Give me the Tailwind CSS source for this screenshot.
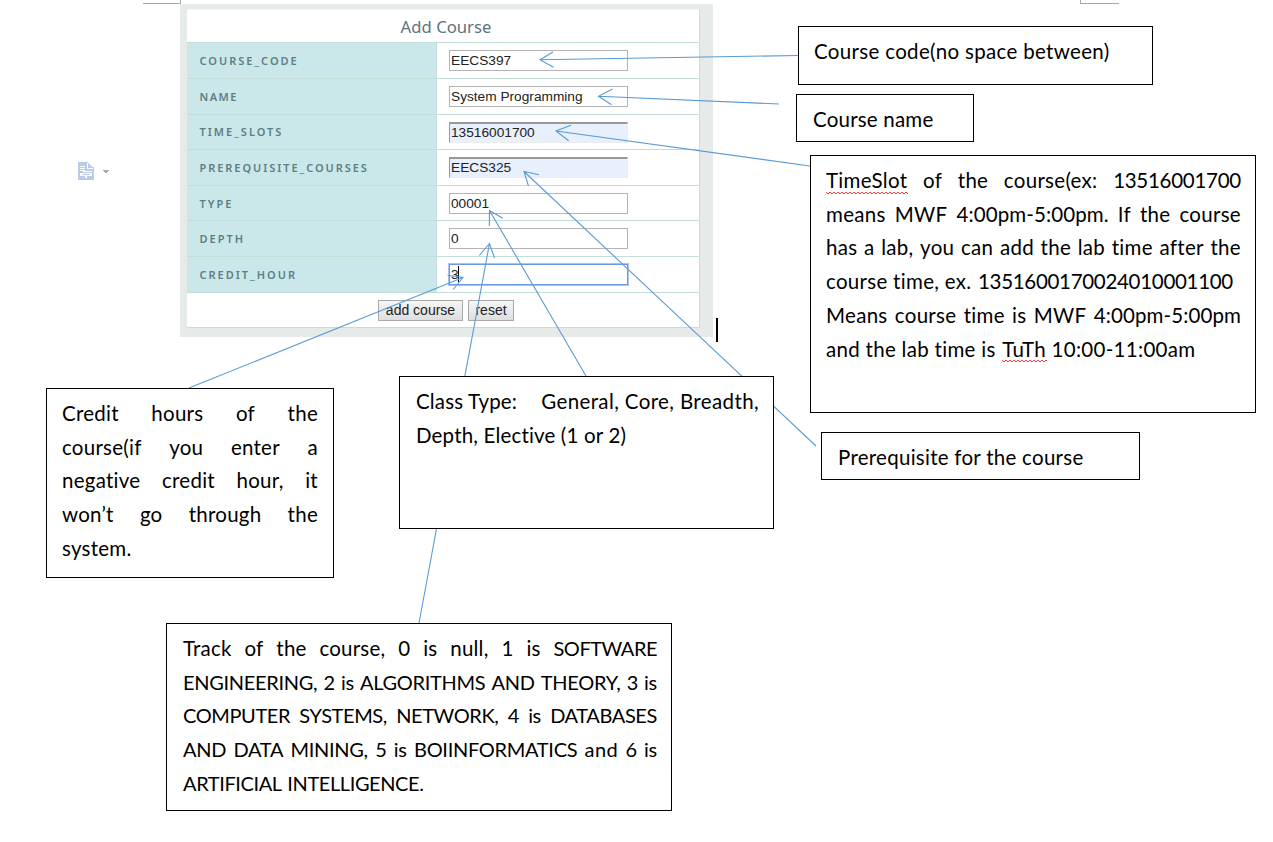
<!DOCTYPE html>
<html lang="en"><head><meta charset="utf-8"><title>Add Course</title>
<script src="https://cdn.jsdelivr.net/npm/@tailwindcss/browser@4"></script></head>
<body class="bg-white">
<main class="relative h-[842px] w-[1273px] overflow-hidden bg-white font-['Lato',sans-serif] text-[20.5px] leading-[33.7px] text-black">

  <!-- page corner marks -->
  <div class="absolute left-[143px] top-0 h-1 w-[38px] border-r border-b border-[#a8a8a8]"></div>
  <div class="absolute left-[1080px] top-0 h-1 w-[39px] border-l border-b border-[#a8a8a8]"></div>

  <!-- paste options -->
  <div class="absolute left-[78px] top-[162px] flex items-center gap-[9px]">
    <svg width="16" height="18" viewBox="0 0 16 18" shape-rendering="crispEdges">
      <path d="M0 0H10V1H11V2H12V3H13V4H14V5H16V18H0Z" fill="#b8cce9"/>
      <path d="M9 1H10V6H15V7H9Z M2 4H7V5H2Z M2 6H7V7H2Z M2 8H7V9H2Z M5 9H14V10H5Z M2 11H14V14H9V16H7V14H2Z" fill="#fff"/>
      <path d="M4 12H12V13H4Z" fill="#b8cce9"/>
    </svg>
    <svg width="6" height="3" viewBox="0 0 6 3" shape-rendering="crispEdges"><path d="M0 0H6V1H5V2H4V3H2V2H1V1H0Z" fill="#a8a8a8"/></svg>
  </div>

  <!-- form -->
  <form class="absolute left-[180px] top-1 h-[333px] w-[533px] bg-[#e6eae8] pl-[7px] pr-[13px] pt-[5px] font-['Liberation_Sans',sans-serif] text-[13.7px] leading-[19px] text-[#222]">
    <div class="border-r border-[#c9dfdc] bg-white">
      <div class="flex h-[33.4px] items-center justify-center border-t border-[#f5f8f7] pl-[6px] font-['Noto_Sans',sans-serif] text-[16.7px] text-[#5b7480]">Add Course</div>
      <div class="grid auto-rows-[35.6px] grid-cols-[250px_1fr] [&>*]:border-t [&>*]:border-[#c5ddd9] [&>label]:flex [&>label]:items-center [&>label]:border-r [&>label]:bg-[#cae8ea] [&>label]:pl-[12.5px] [&>label]:font-['Noto_Sans',sans-serif] [&>label]:text-[11px] [&>label]:font-semibold [&>label]:tracking-[2px] [&>label]:text-[#5d7e84] [&>div]:pl-3 [&>div]:pt-[7px]">
        <label>COURSE_CODE</label><div><p class="h-[21px] w-[179px] border border-[#b4b4b4] pl-px">EECS397</p></div>
        <label class="tracking-[1.5px]!">NAME</label><div><p class="h-[21px] w-[179px] border border-[#b4b4b4] pl-px">System Programming</p></div>
        <label>TIME_SLOTS</label><div><p class="h-[21px] w-[179px] border border-t-2 border-[#ececec] border-t-[#999] border-l-[#999] bg-[#e8effd] pl-px leading-[17px]">13516001700</p></div>
        <label class="tracking-[1.95px]!">PREREQUISITE_COURSES</label><div><p class="h-[21px] w-[179px] border border-t-2 border-[#ececec] border-t-[#999] border-l-[#999] bg-[#e8effd] pl-px leading-[17px]">EECS325</p></div>
        <label>TYPE</label><div><p class="h-[21px] w-[179px] border border-[#b4b4b4] pl-px">00001</p></div>
        <label>DEPTH</label><div><p class="h-[21px] w-[179px] border border-[#b4b4b4] pl-px">0</p></div>
        <label>CREDIT_HOUR</label><div><p class="flex h-[21px] w-[179px] items-center border border-[#6a9ae6] pl-px outline outline-[#a5c5f5]">3<span class="-ml-px h-4 w-px bg-black"></span></p></div>
      </div>
      <div class="flex h-[36px] gap-[5px] border-t border-b border-[#c5ddd9] pl-[191px] pt-[7px] text-[14px]">
        <span class="h-[21px] w-[85px] border border-[#a9a9a9] bg-linear-to-b from-[#f6f6f6] to-[#dedede] text-center">add course</span>
        <span class="h-[21px] w-[46px] border border-[#a9a9a9] bg-linear-to-b from-[#f6f6f6] to-[#dedede] text-center">reset</span>
      </div>
    </div>
  </form>
  <div class="absolute left-[716px] top-[318px] h-6 w-0.5 bg-black"></div>

  <!-- arrows -->
  <svg class="absolute left-0 top-0" width="1273" height="842" fill="none" stroke="#5b9bd5" stroke-width="1.1">
    <path d="M798 55.5L540 59.7M553 52L540 59.7L553.5 67.3"/>
    <path d="M779 104L598.5 96.3M612.5 89L598.5 96.3L611.5 104.7"/>
    <path d="M810 166L556 131M571 125.2L556 131L568.7 140.7"/>
    <path d="M816 446L524 171.5M539 174.7L524 171.5L528.5 186"/>
    <path d="M586 376L489.5 210.5M489.3 226L489.5 210.5L502.7 218.3"/>
    <path d="M419 623L489.5 243.5M479.3 255.5L489.5 243.5L494.5 258"/>
    <path d="M189 388L463 277.5M447.5 275.3L463 277.5L453.2 289.5"/>
  </svg>

  <!-- callouts -->
  <div class="absolute left-[798px] top-[26px] h-[59px] w-[355px] border border-black bg-white pl-[15px] pt-[8px] tracking-[0.33px]">Course code(no space between)</div>
  <div class="absolute left-[796px] top-[94px] h-[48px] w-[178px] border border-black bg-white pl-4 pt-[8px] tracking-[0.2px]">Course name</div>

  <div class="absolute left-[810px] top-[155px] h-[258px] w-[446px] border border-black bg-white pl-[15px] pr-[14px] pt-[8px] tracking-[0.3px] whitespace-nowrap">
    <p class="flex justify-between"><span class="relative tracking-[0.3px]">TimeSlot<svg class="absolute left-0 top-[27px]" width="83" height="4"><path id="w" d="M0 1l2 2l2-2l2 2l2-2l2 2l2-2l2 2l2-2l2 2l2-2l2 2l2-2l2 2l2-2l2 2l2-2l2 2l2-2l2 2l2-2l2 2l2-2l2 2l2-2l2 2l2-2l2 2l2-2l2 2l2-2l2 2l2-2l2 2l2-2l2 2l2-2l2 2l2-2l2 2l2-2l2 2" fill="none" stroke="#f22" stroke-width=".9"/></svg></span><span>of</span><span>the</span><span>course(ex:</span><span class="tracking-[-0.27px]">13516001700</span></p>
    <p class="flex justify-between"><span>means</span><span>MWF</span><span class="tracking-[0.1px]">4:00pm-5:00pm.</span><span>If</span><span>the</span><span>course</span></p>
    <p class="flex justify-between"><span>has</span><span>a</span><span>lab,</span><span>you</span><span>can</span><span>add</span><span>the</span><span>lab</span><span>time</span><span>after</span><span>the</span></p>
    <p>course time, ex. <span class="ml-px tracking-[-0.3px]">1351600170024010001100</span></p>
    <p class="flex justify-between"><span>Means</span><span>course</span><span>time</span><span>is</span><span>MWF</span><span class="tracking-[0.1px]">4:00pm-5:00pm</span></p>
    <p>and the lab time is <span class="relative ml-px">TuTh<svg class="absolute left-0 top-[22px]" width="45" height="4"><use href="#w"/></svg></span> 10:00-11:00am</p>
  </div>

  <div class="absolute left-[399px] top-[376px] h-[153px] w-[375px] border border-black bg-white pl-4 pr-[14px] pt-[8px]">
    <p class="flex justify-between tracking-[0.38px]"><span class="tracking-[0.15px]">Class Type:</span><span>General, Core, Breadth,</span></p>
    <p class="tracking-[0.17px]">Depth, Elective (1 or 2)</p>
  </div>

  <div class="absolute left-[46px] top-[388px] h-[190px] w-[288px] border border-black bg-white px-[15px] pt-[8px] tracking-[0.25px]">
    <p class="flex justify-between"><span>Credit</span><span>hours</span><span>of</span><span>the</span></p>
    <p class="flex justify-between"><span>course(if</span><span>you</span><span>enter</span><span>a</span></p>
    <p class="flex justify-between"><span>negative</span><span>credit</span><span>hour,</span><span>it</span></p>
    <p class="flex justify-between"><span>won’t</span><span>go</span><span>through</span><span>the</span></p>
    <p>system.</p>
  </div>

  <div class="absolute left-[166px] top-[623px] h-[188px] w-[506px] border border-black bg-white pl-4 pr-[14px] pt-[8px] text-[20px] tracking-[-0.3px]">
    <p class="flex justify-between text-[20.5px] [&>span]:tracking-[0.2px]"><span>Track</span><span>of</span><span>the</span><span>course,</span><span>0</span><span>is</span><span>null,</span><span>1</span><span>is</span><b class="text-[20px] font-normal tracking-[-0.5px]">SOFTWARE</b></p>
    <p class="flex justify-between"><span>ENGINEERING,</span><span>2</span><span>is</span><span>ALGORITHMS</span><span>AND</span><span>THEORY,</span><span>3</span><span>is</span></p>
    <p class="flex justify-between tracking-[-0.4px]"><span>COMPUTER</span><span>SYSTEMS,</span><span>NETWORK,</span><span>4</span><span>is</span><span>DATABASES</span></p>
    <p class="flex justify-between tracking-[-0.3px]"><span>AND</span><span>DATA</span><span>MINING,</span><span>5</span><span>is</span><span>BOIINFORMATICS</span><span class="tracking-[0.4px]">and</span><span>6</span><span>is</span></p>
    <p class="tracking-[-0.4px] [word-spacing:1.5px]">ARTIFICIAL INTELLIGENCE.</p>
  </div>

  <div class="absolute left-[821px] top-[432px] h-[48px] w-[319px] border border-black bg-white pl-4 pt-[8px] tracking-[0.27px]">Prerequisite for the course</div>
</main>
</body></html>
